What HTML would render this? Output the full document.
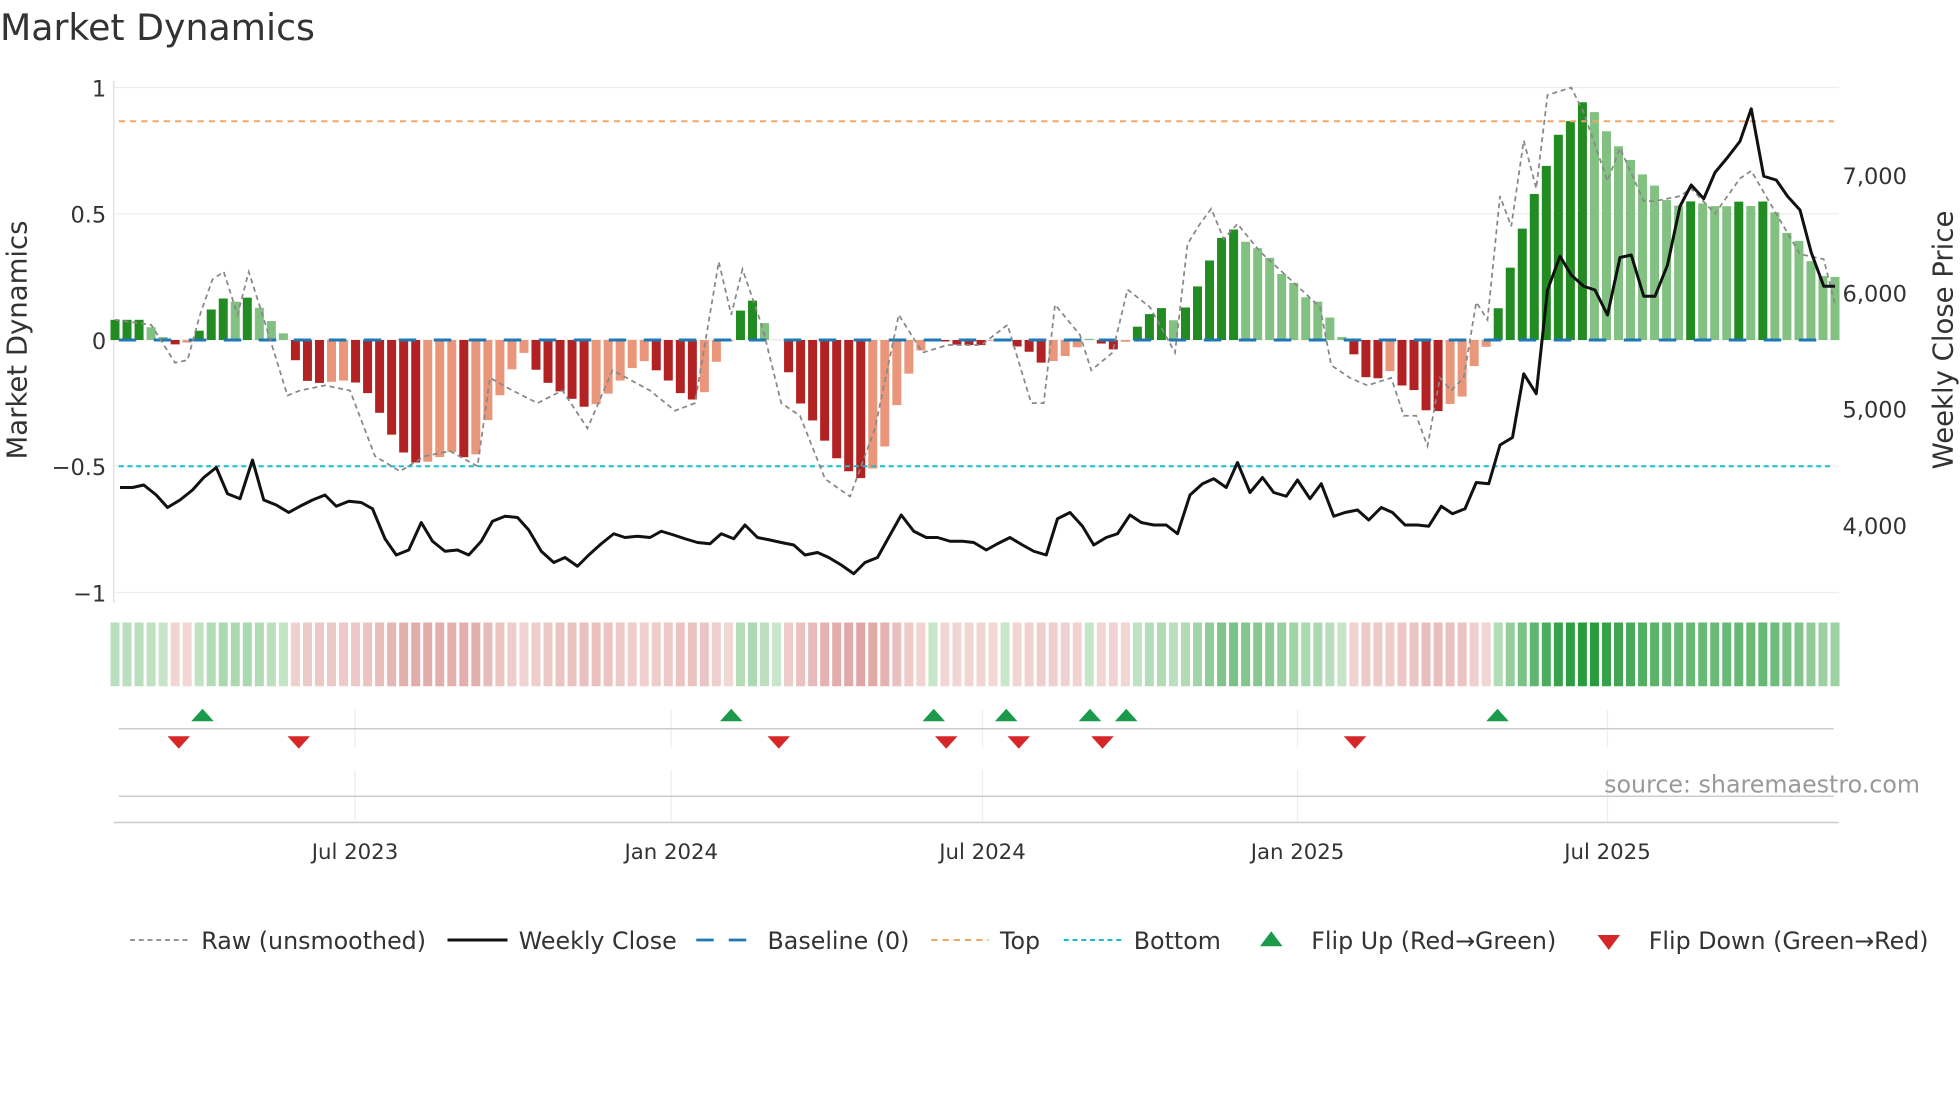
<!DOCTYPE html>
<html><head><meta charset="utf-8">
<style>
html,body{margin:0;padding:0;background:#fff;width:1960px;height:1102px;overflow:hidden}
svg{display:block}
text{font-family:"DejaVu Sans","Liberation Sans",sans-serif;fill:#333}
</style></head>
<body>
<svg id="c" width="1960" height="1102" viewBox="0 0 1568 881.6" xmlns="http://www.w3.org/2000/svg"></svg>
<script>
const S=document.getElementById('c');let h='';
const Y=v=>272-v*202;
h+='<text x="0" y="32" font-size="29">Market Dynamics</text>';
[1,0.5,0,-0.5,-1].forEach(v=>{h+=`<line x1="91" x2="1471" y1="${Y(v)}" y2="${Y(v)}" stroke="#eee" stroke-width="1"/>`});
h+='<line x1="91" x2="91" y1="65" y2="482" stroke="#ddd"/>';
[[1,'1'],[0.5,'0.5'],[0,'0'],[-0.5,'\u22120.5'],[-1,'\u22121']].forEach(([v,t])=>{h+=`<text x="85" y="${Y(v)+7}" font-size="18" text-anchor="end">${t}</text>`});
[[140,'7,000'],[234,'6,000'],[327,'5,000'],[420,'4,000']].forEach(([y,t])=>{h+=`<text x="1474" y="${y+7}" font-size="18">${t}</text>`});
h+='<text transform="translate(21,272) rotate(-90)" font-size="22" text-anchor="middle">Market Dynamics</text>';
h+='<text transform="translate(1562,272) rotate(-90)" font-size="22" text-anchor="middle">Weekly Close Price</text>';
const K=[[92,.08],[102,.08],[112,.08],[121,.05],[131,.01],[141,-.02],[150,-.01],[160,.04],[170,.13],[180,.17],[189,.15],[199,.17],[209,.12],[218,.07],[228,.02],[238,-.1],[247,-.17],[257,-.17],[276,-.16],[286,-.17],[296,-.22],[305,-.3],[315,-.39],[325,-.46],[334,-.49],[344,-.48],[363,-.44],[373,-.47],[382,-.45],[392,-.29],[402,-.2],[411,-.1],[421,-.04],[431,-.14],[441,-.18],[450,-.21],[460,-.24],[469,-.27],[479,-.25],[489,-.2],[498,-.15],[508,-.1],[517,-.08],[527,-.13],[537,-.17],[546,-.22],[556,-.24],[565,-.2],[575,-.06],[585,.01],[594,.14],[604,.16],[613,.05],[623,-.01],[633,-.16],[642,-.27],[652,-.33],[661,-.41],[671,-.48],[681,-.53],[690,-.55],[700,-.5],[709,-.41],[719,-.23],[729,-.11],[738,-.03],[748,.01],[758,-.01],[767,-.02],[787,-.02],[796,0],[806,0],[815,-.03],[825,-.05],[835,-.1],[844,-.08],[854,-.06],[864,-.02],[873,.01],[883,-.02],[892,-.04],[902,0],[911,.06],[921,.11],[931,.13],[940,.07],[950,.14],[960,.23],[969,.33],[979,.42],[988,.44],[998,.38],[1008,.36],[1017,.32],[1027,.25],[1037,.22],[1046,.16],[1056,.15],[1065,.08],[1075,0],[1085,-.07],[1094,-.16],[1104,-.15],[1113,-.12],[1123,-.19],[1133,-.2],[1142,-.29],[1152,-.28],[1161,-.25],[1171,-.22],[1181,-.08],[1190,-.02],[1200,.15],[1209,.3],[1219,.46],[1229,.6],[1238,.7],[1248,.83],[1257,.87],[1267,.95],[1276,.9],[1286,.82],[1296,.76],[1305,.71],[1315,.65],[1324,.61],[1334,.55],[1344,.53],[1353,.55],[1363,.54],[1372,.53],[1382,.53],[1392,.55],[1401,.53],[1411,.55],[1421,.5],[1430,.42],[1440,.39],[1449,.31],[1459,.25],[1468,.25]];
function interp(P,x){if(x<=P[0][0])return P[0][1];for(let i=1;i<P.length;i++){if(x<=P[i][0]){const a=P[i-1],b=P[i];return a[1]+(b[1]-a[1])*(x-a[0])/(b[0]-a[0]);}}return P[P.length-1][1];}
const N=144,sp=(1468-92)/(N-1);const V=[];for(let i=0;i<N;i++)V.push(interp(K,92+i*sp));
for(let i=0;i<N;i++){const x=92+i*sp,v=V[i];const up=i==0||Math.abs(v)>=Math.abs(V[i-1]);let c;if(v>=0)c=up?'#228b22':'#82c182';else c=up?'#b22222':'#e9967a';const y=v>=0?Y(v):272;h+=`<rect x="${x-3.6}" y="${y}" width="7.2" height="${Math.abs(v)*202}" fill="${c}"/>`;
const a=Math.min(1,Math.abs(v)/0.9);let hc;if(v>=0){const r=Math.round(200-a*160),g=Math.round(230-a*75),b=Math.round(201-a*140);hc=`rgb(${r},${g},${b})`}else{const r=Math.round(242-a*30),g=Math.round(215-a*80),b=Math.round(213-a*80);hc=`rgb(${r},${g},${b})`}h+=`<rect x="${x-3.6}" y="498" width="7.2" height="51" fill="${hc}"/>`;}
h+='<line x1="95" x2="1467" y1="97" y2="97" stroke="#f0a868" stroke-width="1.6" stroke-dasharray="5,4"/>';
h+='<line x1="95" x2="1467" y1="373" y2="373" stroke="#17becf" stroke-width="1.6" stroke-dasharray="4,3"/>';
h+='<line x1="95" x2="1467" y1="272" y2="272" stroke="#1f77b4" stroke-width="2.4" stroke-dasharray="14,14"/>';
const R=[[92,.08],[121,.06],[140,-.09],[150,-.08],[160,.1],[170,.24],[179,.27],[190,.1],[199,.27],[210,.1],[230,-.22],[240,-.2],[260,-.18],[280,-.2],[300,-.46],[320,-.52],[340,-.46],[360,-.44],[382,-.5],[392,-.15],[410,-.2],[430,-.25],[450,-.2],[470,-.35],[490,-.12],[520,-.2],[540,-.28],[556,-.25],[575,.31],[585,.1],[594,.28],[610,.05],[625,-.25],[640,-.3],[660,-.55],[680,-.62],[700,-.35],[719,.1],[738,-.05],[758,-.02],[785,-.02],[806,.06],[825,-.25],[835,-.25],[844,.14],[864,.02],[873,-.12],[890,-.05],[902,.2],[920,.13],[940,-.05],[950,.38],[960,.46],[969,.52],[979,.4],[990,.46],[1008,.35],[1030,.25],[1056,.13],[1065,-.1],[1080,-.15],[1094,-.18],[1113,-.15],[1123,-.3],[1133,-.3],[1142,-.42],[1152,-.15],[1161,-.2],[1171,-.15],[1181,.15],[1190,.08],[1200,.57],[1209,.45],[1219,.79],[1229,.6],[1238,.97],[1257,1.0],[1267,.9],[1286,.63],[1296,.76],[1315,.55],[1324,.55],[1344,.57],[1353,.6],[1372,.5],[1392,.64],[1401,.67],[1421,.5],[1440,.34],[1459,.32],[1468,.14]];
h+='<polyline fill="none" stroke="#888" stroke-width="1.4" stroke-dasharray="4,3" points="'+R.map(p=>p[0]+','+Y(p[1])).join(' ')+'"/>';
const W=[[96,390],[106,390],[115,388],[125,396],[134,406],[144,400],[154,392],[163,382],[173,374],[182,395],[192,399],[202,368],[211,400],[221,404],[231,410],[240,405],[250,400],[260,396],[269,405],[279,401],[289,402],[298,407],[308,431],[317,444],[327,440],[337,418],[346,433],[356,441],[366,440],[375,444],[385,433],[394,417],[404,413],[414,414],[423,424],[433,441],[443,450],[452,446],[462,453],[471,444],[481,435],[491,427],[500,430],[510,429],[520,430],[529,425],[539,428],[548,431],[558,434],[568,435],[577,427],[587,431],[596,420],[606,430],[616,432],[625,434],[635,436],[644,444],[654,442],[663,446],[673,452],[683,459],[692,450],[702,446],[712,428],[721,412],[731,425],[741,430],[750,430],[760,433],[770,433],[779,434],[789,440],[798,435],[808,430],[818,436],[827,441],[837,444],[846,415],[856,410],[866,421],[875,436],[885,430],[894,427],[904,412],[913,418],[923,420],[933,420],[942,427],[952,396],[962,387],[971,383],[981,390],[990,370],[1000,394],[1010,382],[1019,394],[1029,397],[1038,384],[1048,399],[1057,387],[1067,413],[1076,410],[1086,408],[1095,416],[1105,406],[1114,410],[1124,420],[1134,420],[1143,421],[1153,405],[1162,411],[1172,407],[1181,386],[1191,387],[1200,356],[1210,350],[1219,299],[1229,315],[1238,232],[1248,205],[1257,220],[1267,229],[1276,232],[1286,252],[1296,206],[1305,204],[1315,237],[1324,237],[1334,212],[1344,165],[1353,148],[1363,159],[1372,138],[1382,126],[1392,113],[1401,87],[1411,141],[1421,144],[1430,157],[1440,168],[1449,202],[1459,229],[1468,229]];
h+='<polyline fill="none" stroke="#111" stroke-width="2.4" stroke-linejoin="round" points="'+W.map(p=>p.join(',')).join(' ')+'"/>';
const T=[284,537,786,1038,1286];
T.forEach(x=>{h+=`<line x1="${x}" x2="${x}" y1="568" y2="598" stroke="#eee"/><line x1="${x}" x2="${x}" y1="616" y2="658" stroke="#eee"/>`});
h+='<line x1="95" x2="1467" y1="583" y2="583" stroke="#ccc" stroke-width="1.2"/>';
h+='<line x1="95" x2="1467" y1="637" y2="637" stroke="#ccc" stroke-width="1.2"/>';
h+='<line x1="91" x2="1471" y1="658" y2="658" stroke="#ccc" stroke-width="1.2"/>';
[162,585,747,805,872,901,1198].forEach(x=>{h+=`<polygon points="${x-9},577 ${x+9},577 ${x},567" fill="#1a9a4a"/>`});
[143,239,623,757,815,882,1084].forEach(x=>{h+=`<polygon points="${x-9},589 ${x+9},589 ${x},599" fill="#d62728"/>`});
h+='<text x="1536" y="634" font-size="19" text-anchor="end" style="fill:#999">source: sharemaestro.com</text>';
[['Jul 2023',284],['Jan 2024',537],['Jul 2024',786],['Jan 2025',1038],['Jul 2025',1286]].forEach(([t,x])=>{h+=`<text x="${x}" y="687" font-size="17" text-anchor="middle">${t}</text>`});
const ly=752,ty=759;
h+=`<line x1="104" x2="150" y1="${ly}" y2="${ly}" stroke="#888" stroke-width="1.4" stroke-dasharray="4,3"/><text x="161" y="${ty}" font-size="19">Raw (unsmoothed)</text>`;
h+=`<line x1="358" x2="406" y1="${ly}" y2="${ly}" stroke="#111" stroke-width="2.4"/><text x="415" y="${ty}" font-size="19">Weekly Close</text>`;
h+=`<line x1="557" x2="603" y1="${ly}" y2="${ly}" stroke="#1f77b4" stroke-width="2.2" stroke-dasharray="14,12"/><text x="614" y="${ty}" font-size="19">Baseline (0)</text>`;
h+=`<line x1="745" x2="791" y1="${ly}" y2="${ly}" stroke="#f0a868" stroke-width="1.6" stroke-dasharray="5,4"/><text x="800" y="${ty}" font-size="19">Top</text>`;
h+=`<line x1="851" x2="897" y1="${ly}" y2="${ly}" stroke="#17becf" stroke-width="1.6" stroke-dasharray="4,3"/><text x="907" y="${ty}" font-size="19">Bottom</text>`;
h+=`<polygon points="1008,757 1026,757 1017,745" fill="#1a9a4a"/><text x="1049" y="${ty}" font-size="19">Flip Up (Red→Green)</text>`;
h+=`<polygon points="1278,748 1296,748 1287,760" fill="#d62728"/><text x="1319" y="${ty}" font-size="19">Flip Down (Green→Red)</text>`;
S.innerHTML=h;
</script>
</body></html>
